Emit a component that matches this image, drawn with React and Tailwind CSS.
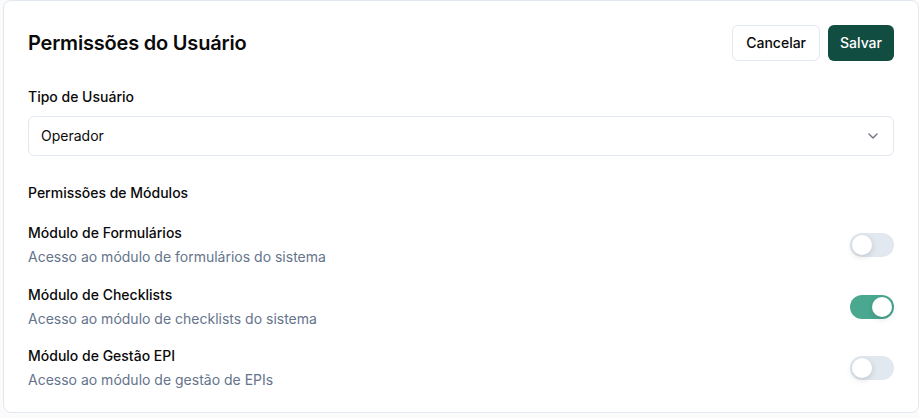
import React from "react";

function Toggle({ on }) {
  return (
    <div
      className={`flex h-6 w-11 shrink-0 items-center rounded-full p-[2px] ${
        on ? "bg-[#4aa891] justify-end" : "bg-[#e2e8f0] justify-start"
      }`}
    >
      <div className="h-5 w-5 rounded-full bg-white shadow-[0_2px_6px_rgba(0,0,0,0.15)]" />
    </div>
  );
}

const modules = [
  { t: "Módulo de Formulários", d: "Acesso ao módulo de formulários do sistema", on: false, gap: "" },
  { t: "Módulo de Checklists", d: "Acesso ao módulo de checklists do sistema", on: true, gap: "mt-[18px]" },
  { t: "Módulo de Gestão EPI", d: "Acesso ao módulo de gestão de EPIs", on: false, gap: "mt-[17px]" },
];

export default function App() {
  return (
    <div
      className="min-h-[418px] w-full bg-[#fbfbfc] pl-[3px] pb-[6px]"
      style={{ fontFamily: "Inter, 'Noto Sans', sans-serif" }}
    >
      <div className="rounded-lg border border-[#e2e8f0] bg-white p-6 pb-[22px] text-[#0a0a0a]">
        <div className="flex h-9 items-center justify-between">
          <h1 className="text-xl font-semibold tracking-[-0.01em]">Permissões do Usuário</h1>
          <div className="flex items-center gap-2">
            <button className="h-9 rounded-md border border-[#e2e8f0] bg-white px-[13px] text-sm font-medium">
              Cancelar
            </button>
            <button className="h-9 rounded-md bg-[#124d41] px-3 text-sm font-medium text-white">
              Salvar
            </button>
          </div>
        </div>

        <div className="mt-[26px] text-sm font-medium leading-5">Tipo de Usuário</div>
        <div className="mt-[9px] flex h-10 items-center justify-between rounded-md border border-[#e2e8f0] px-3 text-sm">
          <span>Operador</span>
          <svg width="16" height="16" viewBox="0 0 24 24" fill="none" stroke="#6b7280" strokeWidth="2" strokeLinecap="round" strokeLinejoin="round">
            <path d="m6 9 6 6 6-6" />
          </svg>
        </div>

        <div className="mt-[27px] text-sm font-medium leading-5">Permissões de Módulos</div>
        <div className="mt-5 flex flex-col">
          {modules.map((m) => (
            <div key={m.t} className={`flex items-center justify-between ${m.gap}`}>
              <div>
                <div className="text-sm font-medium leading-5">{m.t}</div>
                <div className="mt-1 text-sm leading-5 text-[#64748b]">{m.d}</div>
              </div>
              <Toggle on={m.on} />
            </div>
          ))}
        </div>
      </div>
    </div>
  );
}
